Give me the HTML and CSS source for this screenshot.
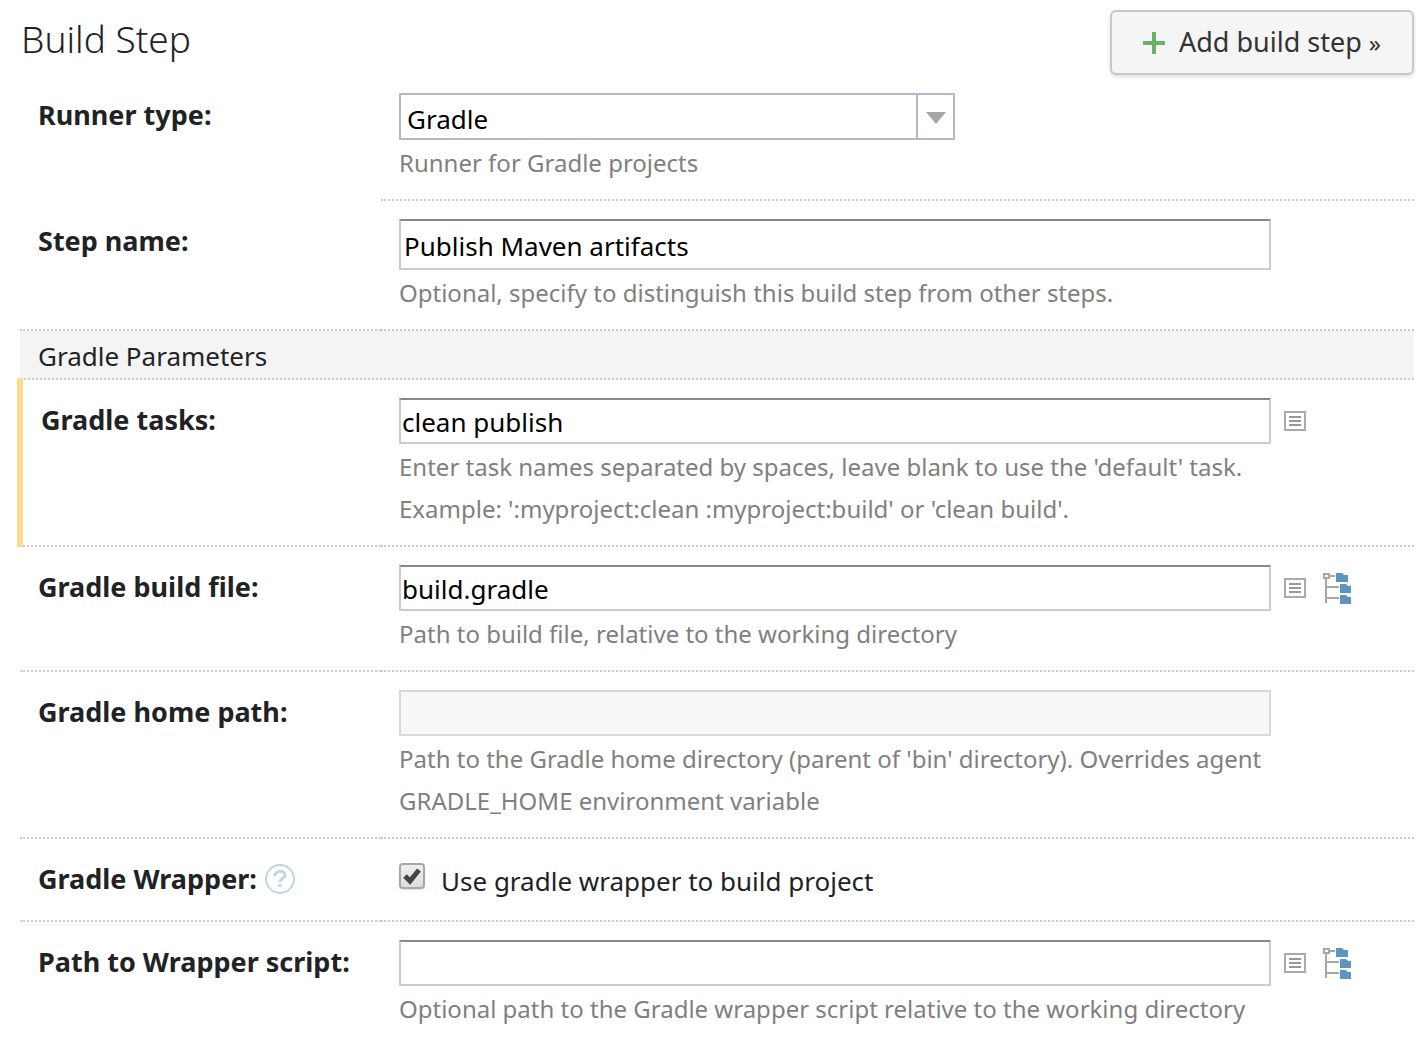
FILE: index.html
```html
<!DOCTYPE html>
<html lang="en">
<head>
<meta charset="utf-8">
<meta name="viewport" content="width=device-width, initial-scale=1">
<title>Build Step</title>
<link rel="stylesheet" href="styles.css">
</head>
<body>
<svg class="sprite" aria-hidden="true">
  <symbol id="icon-list" viewBox="0 0 22 20">
    <path fill="none" stroke="#aaa" stroke-width="2" d="M1 1h20v18H1z"/>
    <path fill="none" stroke="#999" stroke-width="2" d="M5 6h12M5 10h12M5 14h12"/>
  </symbol>
  <symbol id="icon-tree" viewBox="0 0 29 32">
    <path fill="none" stroke="#a6a6a6" stroke-width="2" d="M1 2h5v4H1zM7 4h5M3 7v24M4 15h12M4 26h12"/>
    <path fill="#6094c0" d="M13 1h6l2 2h4v7H13zM17 12h6l2 2h3v7H17zM17 23h6l2 2h3v7H17z"/>
  </symbol>
</svg>
<main class="page">
  <header class="header">
    <h1 class="title">Build Step</h1>
    <button type="button" class="add-button">
      <svg class="plus" viewBox="0 0 22 22" aria-hidden="true"><path fill="none" stroke="#67b168" stroke-width="4" d="M11 0v22M0 11h22"/></svg>
      <span>Add build step <span class="raquo">»</span></span>
    </button>
  </header>
  <form class="form">
    <div class="row row-first">
      <div class="label-cell"><label for="runner">Runner type:</label></div>
      <div class="value-cell">
        <div class="select-box">
          <select id="runner" class="select"><option>Gradle</option></select>
          <svg class="arrow" viewBox="0 0 20 12" aria-hidden="true"><path fill="#a6a6a6" d="M0 0h20L10 12z"/></svg>
        </div>
        <p class="hint">Runner for Gradle projects</p>
      </div>
    </div>
    <div class="row">
      <div class="label-cell"><label for="step-name">Step name:</label></div>
      <div class="value-cell">
        <div class="control"><input id="step-name" class="text text-large" type="text" value="Publish Maven artifacts"></div>
        <p class="hint">Optional, specify to distinguish this build step from other steps.</p>
      </div>
    </div>
    <h2 class="section">Gradle Parameters</h2>
    <div class="row row-changed">
      <div class="label-cell"><label for="tasks">Gradle tasks:</label></div>
      <div class="value-cell">
        <div class="control">
          <input id="tasks" class="text" type="text" value="clean publish">
          <button type="button" class="icon-button" aria-label="Insert parameter"><svg class="list"><use href="#icon-list"/></svg></button>
        </div>
        <p class="hint">Enter task names separated by spaces, leave blank to use the 'default' task.<br>Example: ':myproject:clean :myproject:build' or 'clean build'.</p>
      </div>
    </div>
    <div class="row">
      <div class="label-cell"><label for="build-file">Gradle build file:</label></div>
      <div class="value-cell">
        <div class="control">
          <input id="build-file" class="text" type="text" value="build.gradle">
          <button type="button" class="icon-button" aria-label="Insert parameter"><svg class="list"><use href="#icon-list"/></svg></button>
          <button type="button" class="icon-button" aria-label="Browse files"><svg class="tree"><use href="#icon-tree"/></svg></button>
        </div>
        <p class="hint">Path to build file, relative to the working directory</p>
      </div>
    </div>
    <div class="row">
      <div class="label-cell"><label for="home">Gradle home path:</label></div>
      <div class="value-cell">
        <div class="control"><input id="home" class="text" type="text" disabled></div>
        <p class="hint">Path to the Gradle home directory (parent of 'bin' directory). Overrides agent GRADLE_HOME environment variable</p>
      </div>
    </div>
    <div class="row">
      <div class="label-cell">
        <span>Gradle Wrapper:</span>
        <a class="help" href="#wrapper" aria-label="Help"><svg class="help-icon" viewBox="0 0 30 30" fill="none" stroke="#bfd5e6"><circle cx="15" cy="15" r="14" stroke-width="2"/><path stroke-width="3" d="M10 12c0-6 10-6 10-1 0 3-5 4-5 7"/><path stroke-width="3" d="M15 20v3"/></svg></a>
      </div>
      <div class="value-cell">
        <div class="check-line">
          <span class="check-box">
            <input id="wrapper" class="check" type="checkbox" checked>
            <svg class="tick" viewBox="0 0 18 18" aria-hidden="true"><path fill="none" stroke="#444" stroke-width="5" d="M2 9l5 5L16 3"/></svg>
          </span>
          <label for="wrapper">Use gradle wrapper to build project</label>
        </div>
      </div>
    </div>
    <div class="row row-last">
      <div class="label-cell"><label for="script">Path to Wrapper script:</label></div>
      <div class="value-cell">
        <div class="control">
          <input id="script" class="text" type="text">
          <button type="button" class="icon-button" aria-label="Insert parameter"><svg class="list"><use href="#icon-list"/></svg></button>
          <button type="button" class="icon-button" aria-label="Browse files"><svg class="tree"><use href="#icon-tree"/></svg></button>
        </div>
        <p class="hint">Optional path to the Gradle wrapper script relative to the working directory</p>
      </div>
    </div>
  </form>
</main>
</body>
</html>
```
FILE: styles.css
```css
* { box-sizing: border-box; }
body {
  margin: 0;
  background: #fff;
  color: #1f2326;
  font: 26px/36px "Noto Sans", "Open Sans", sans-serif;
}
button, input, select { font: inherit; }
.sprite { display: none; }
.page { padding: 10px 9px 0 20px; }
.header {
  display: flex;
  justify-content: space-between;
  align-items: flex-start;
}
.title {
  margin: 4px 0 0 1px;
  font-size: 37px;
  line-height: 50px;
  font-weight: 300;
}
.add-button {
  display: flex;
  align-items: center;
  justify-content: center;
  gap: 14px;
  width: 304px;
  height: 65px;
  padding: 0;
  border: 2px solid #c8c8c8;
  border-radius: 6px;
  background: #f5f5f5;
  box-shadow: 0 2px 4px #0002;
  color: #333;
  font-size: 27px;
  white-space: nowrap;
}
.plus { width: 22px; height: 22px; }
.raquo { font-size: 24px; }
.row {
  position: relative;
  display: grid;
  grid-template-columns: 361px 1fr;
}
.label-cell, .value-cell { border-bottom: 2px dotted #ccc; }
.label-cell {
  display: flex;
  align-items: center;
  align-content: flex-start;
  flex-wrap: wrap;
  gap: 8px;
  padding: 22px 0 0 18px;
  font-size: 27px;
  font-weight: 700;
}
.value-cell { padding: 18px 0 15px 18px; }
.row-first .label-cell, .row-last .label-cell, .row-last .value-cell { border-bottom: 0; }
.row-changed::before {
  content: "";
  position: absolute;
  top: -2px;
  bottom: 0;
  left: -3px;
  width: 6px;
  background: #fadc8e;
}
.row-changed .label-cell { padding-left: 21px; }
.control { display: flex; align-items: center; gap: 13px; }
.text {
  flex: 0 1 872px;
  min-width: 0;
  height: 46px;
  padding: 2px 0 0 1px;
  border: 2px solid #ccc;
  border-top-color: #888;
  border-radius: 0;
  background: #fff;
  color: #000;
}
.text-large { height: 51px; padding-left: 3px; }
.text:disabled { border-color: #d9d9d9; background: #f8f8f8; }
.hint {
  max-width: 872px;
  margin: 2px 0 0;
  color: #808080;
  font-size: 24px;
  line-height: 42px;
}
.select-box { position: relative; max-width: 556px; }
.select {
  display: block;
  width: 100%;
  height: 47px;
  padding: 4px 44px 0 6px;
  border: 2px solid #b4b8cc;
  border-radius: 0;
  appearance: none;
  background: linear-gradient(#b4b8cc, #b4b8cc) right 35px top / 2px 100% no-repeat #fff;
  color: #000;
}
.arrow {
  position: absolute;
  top: 19px;
  right: 9px;
  width: 20px;
  height: 12px;
  pointer-events: none;
}
.section {
  margin: 0;
  padding: 7px 18px 4px;
  border-bottom: 2px dotted #ccc;
  background: #f4f4f4;
  font-size: 26px;
  line-height: 36px;
  font-weight: 400;
}
.icon-button {
  display: flex;
  flex: none;
  padding: 0;
  border: 0;
  background: none;
}
.icon-button + .icon-button { margin-left: 4px; }
.list { width: 22px; height: 20px; }
.tree { width: 29px; height: 32px; }
.help { display: flex; }
.help-icon { width: 30px; height: 30px; }
.check-line {
  display: flex;
  align-items: flex-start;
  gap: 16px;
  padding: 6px 0;
}
.check-box { position: relative; display: flex; }
.check {
  width: 26px;
  height: 26px;
  margin: 0;
  border: 2px solid #a8a8a8;
  border-radius: 4px;
  appearance: none;
  background: linear-gradient(#eee, #ddd);
  box-shadow: 0 1px 2px #0002;
}
.tick {
  position: absolute;
  top: 4px;
  left: 4px;
  width: 18px;
  height: 18px;
  pointer-events: none;
}
```
